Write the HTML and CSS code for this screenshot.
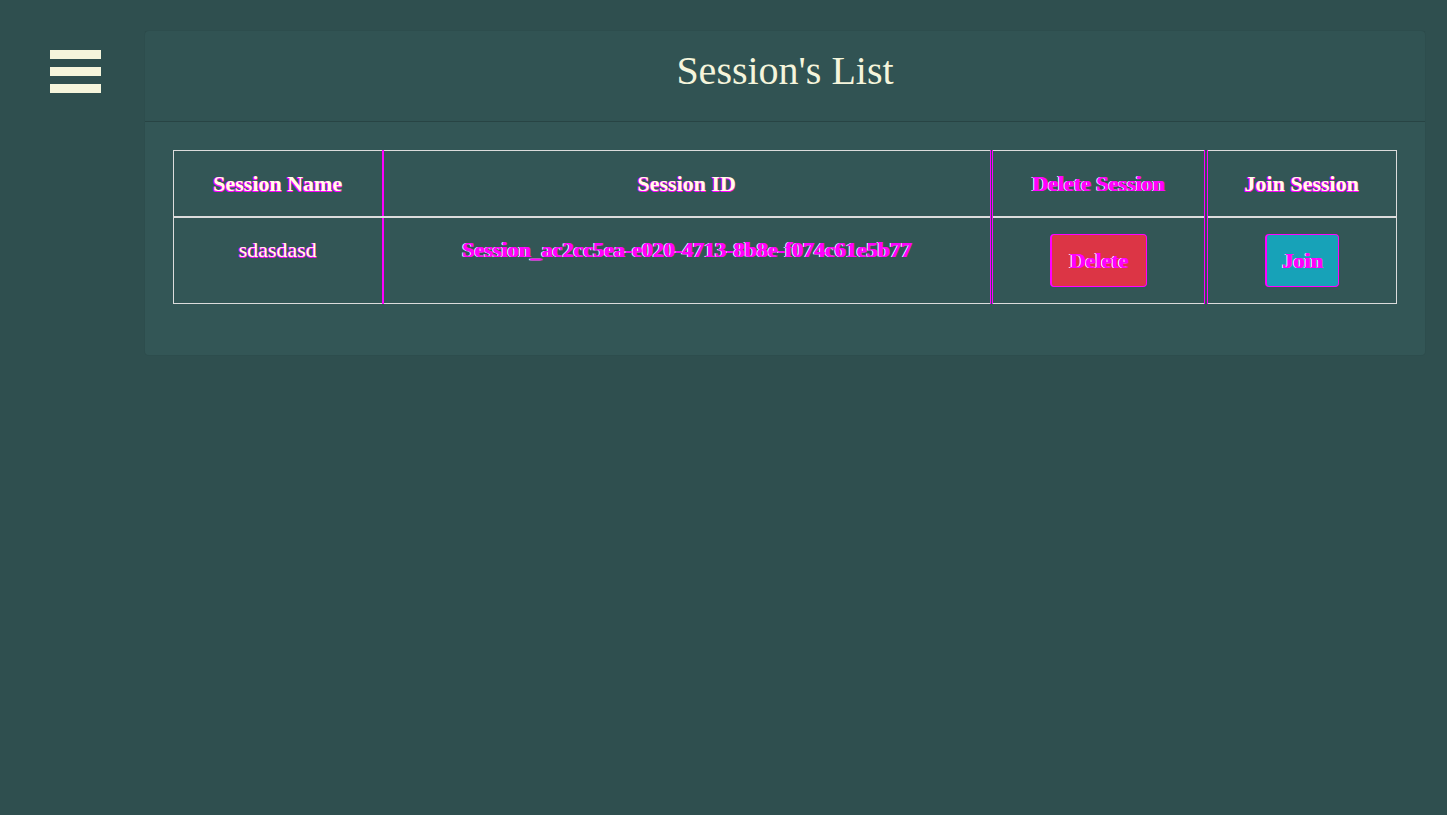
FILE: index.html
```html
<!DOCTYPE html>
<html>
<head>
<meta charset="utf-8">
<link rel="stylesheet" href="styles.css">
</head>
<body>
<div class="page">
  <div class="menu">
    <span class="bar"></span>
    <span class="bar"></span>
    <span class="bar"></span>
  </div>
  <div class="card">
    <div class="card-header">
      <h1 class="title">Session's List</h1>
    </div>
    <div class="card-body">
      <table class="sessions">
        <colgroup>
          <col class="col1">
          <col class="col2">
          <col class="col3">
          <col class="col4">
        </colgroup>
        <thead>
          <tr>
            <th class="c1 glow">Session Name</th>
            <th class="c2 glow-heavy">Session ID</th>
            <th class="c3 glow-full">Delete Session</th>
            <th class="c4 glow">Join Session</th>
          </tr>
        </thead>
        <tbody>
          <tr>
            <td class="c1 name glow-heavy">sdasdasd</td>
            <td class="c2 sid glow-full">Session_ac2cc5ea-e020-4713-8b8e-f074c61e5b77</td>
            <td class="c3"><button class="btn btn-delete glow-full">Delete</button></td>
            <td class="c4"><button class="btn btn-join glow-full">Join</button></td>
          </tr>
        </tbody>
      </table>
    </div>
  </div>
</div>
</body>
</html>
```

FILE: styles.css
```css
html, body {
  margin: 0;
  padding: 0;
  background: #2f4f4f;
  height: 100%;
}
body {
  font-family: "Liberation Serif", "Times New Roman", serif;
  color: #fffde8;
}
.page {
  display: flex;
  align-items: flex-start;
  padding: 30px 21px 0 50px;
}
.menu {
  width: 51px;
  display: flex;
  flex-direction: column;
  gap: 8px;
  padding-top: 20px;
  margin-right: 43px;
}
.bar {
  display: block;
  height: 9px;
  background: #f5f5dc;
}
.card {
  flex: 1;
  background: #335656;
  border: 1px solid rgba(0, 0, 0, 0.1);
  border-radius: 5px;
}
.card-header {
  height: 90px;
  border-bottom: 1px solid rgba(0, 0, 0, 0.18);
  display: flex;
  align-items: center;
  justify-content: center;
  background: rgba(0, 0, 0, 0.03);
}
.title {
  margin: 0;
  font-weight: normal;
  font-size: 40px;
  color: #f5f5dc;
  position: relative;
  top: -6px;
}
.card-body {
  padding: 28px 28px 51px 28px;
}
.sessions {
  width: 100%;
  border-collapse: collapse;
  border: 1px solid #dcdcdc;
  table-layout: fixed;
}
.col1 { width: 209px; }
.col2 { width: 609px; }
.col3 { width: 214px; }
.sessions th, .sessions td {
  text-align: center;
  vertical-align: top;
  padding-left: 4px;
  padding-right: 4px;
}
.sessions th {
  font-size: 22px;
  font-weight: bold;
  line-height: 30px;
  padding-top: 18px;
  padding-bottom: 17px;
  border-bottom: 2px solid #dcdcdc;
}
.sessions td {
  font-size: 22px;
  line-height: 30px;
  padding-top: 17px;
  padding-bottom: 16px;
}
.c1 { border-right: 2px solid #f0f; }
.c2 { border-right: 3px double #f0f; }
.c3 { border-right: 4px double #f0f; }
.sid { font-weight: bold; }
.name { font-weight: normal; }

.glow {
  color: #fffde8;
  text-shadow: -1px 0 #f0f, 0 1px #f0f, -1px 1px #f0f;
}
.glow-heavy {
  color: #fffde8;
  text-shadow: -1px 0 #f0f, 0 1px #f0f;
}
.glow-full {
  color: #f0f;
  text-shadow: 1px 0 #f0f, -1px 0 #fffde8;
}
.btn {
  font-family: "Liberation Serif", "Times New Roman", serif;
  font-size: 22px;
  font-weight: bold;
  height: 53px;
  border-radius: 4px;
  border: 1px solid #f0f;
  border-left-width: 2px;
  padding: 0 10px;
  cursor: pointer;
  margin-top: -1px;
}
.btn-delete {
  background: #dc3545;
  width: 97px;
}
.btn-join {
  background: #17a2b8;
  width: 74px;
}
```
